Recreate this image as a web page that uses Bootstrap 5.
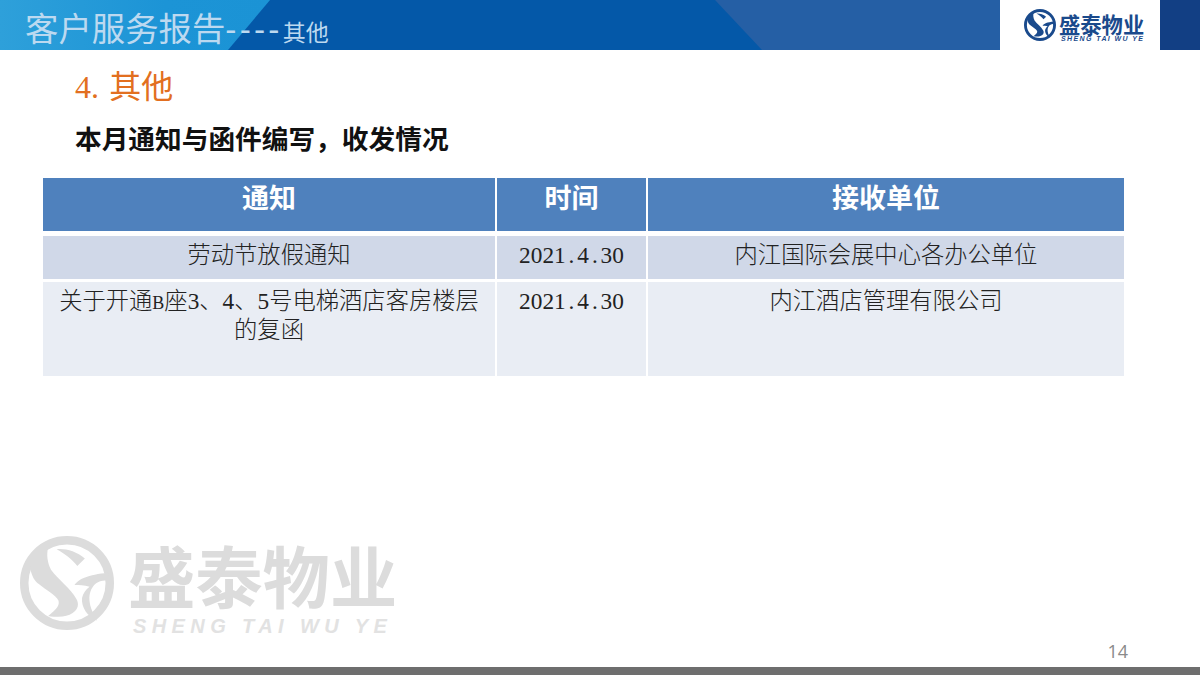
<!DOCTYPE html>
<html lang="zh-CN">
<head>
<meta charset="utf-8">
<title>客户服务报告</title>
<link href="https://cdn.jsdelivr.net/npm/bootstrap@5.3.0/dist/css/bootstrap.min.css" rel="stylesheet">
<style>
html,body{height:675px;overflow:hidden}
body{background:#fff;font-family:"Noto Sans CJK SC",sans-serif;color:#222}
.slide{height:675px;width:1200px}
.topbar{height:50px;position:relative;background:#255fa5;overflow:hidden}
.topbar::before{content:"";position:absolute;inset:0 0 0 0;width:770px;background:#0458a8;clip-path:polygon(0 0,715px 0,762px 100%,0 100%)}
.topbar::after{content:"";position:absolute;inset:0;width:275px;background:linear-gradient(90deg,#2ea0da 0,#1c94d6 60%,#1b93d5 100%);clip-path:polygon(0 0,270px 0,228px 100%,0 100%)}
.bar-title{position:relative;z-index:1;padding:2px 0 0 25px;color:#bcd9f0;font-size:33.4px;line-height:50px;white-space:nowrap;flex:1 1 auto}
.bar-dash{font-family:"Liberation Sans",sans-serif;letter-spacing:3.2px}
.bar-sub{font-size:23px}
.logo-box{position:relative;z-index:1;width:160px;height:50px;background:#fff;padding-left:24px}
.bar-end{position:relative;z-index:1;width:40px;height:50px;background:#123f84}
.logo-small{width:32px;height:32px;color:#1a4a8c;margin-top:9px;flex:none}
.brand-small{color:#1a4a8c;margin-left:3px;margin-top:12px}
.brand-small-cn{font-size:21.3px;line-height:23px;font-weight:700;white-space:nowrap}
.brand-small-en{font:italic 700 7px/7px "Liberation Sans",sans-serif;letter-spacing:1.4px;white-space:nowrap;padding-left:2px}
.sec-head{color:#e26f20;font-size:32px;line-height:40px;padding:14px 0 0 75px}
.sec-num{font-family:"Liberation Serif",serif;margin-right:3px}
.sec-lead{font-size:26.7px;font-weight:700;line-height:36px;color:#111;padding:13px 0 0 75px}
.tbl-wrap{padding:22px 76px 0 43px}
.notice-tbl{table-layout:fixed;width:1081px;margin:0;border-collapse:separate;border-spacing:0;font-size:23.3px;font-weight:300;line-height:29px;color:#222;text-align:center}
.notice-tbl th,.notice-tbl td{padding:0 14px;border:0 solid #fff;border-right-width:2px;box-shadow:none;vertical-align:top}
.notice-tbl th:last-child,.notice-tbl td:last-child{border-right-width:0}
.notice-tbl th{height:58px;background:#4f81bd;color:#fff;font-size:27px;font-weight:700;padding-top:4px;border-bottom-width:5px;line-height:30px}
.row-a td{height:46px;background:#d0d8e8;border-bottom-width:3px;padding-top:3px}
.row-b td{height:94px;background:#e9edf4;padding-top:3px}
.lat{font-family:"Liberation Serif",serif;font-weight:400;line-height:1}
.lat-b{font-size:18px}
.dot{display:inline-block;width:.5em;font-style:normal;text-align:center}
.tail{margin-top:auto;height:130px;padding-left:20px}
.mark-logo{width:94px;height:94px;color:#dcdcdc;flex:none;margin-top:-1px}
.mark-text{color:#dcdcdc;margin-left:16px}
.mark-cn{font-size:67.3px;line-height:74px;font-weight:700;white-space:nowrap;margin-left:-2px}
.mark-en{font:italic 700 20px/22px "Liberation Sans",sans-serif;letter-spacing:5.4px;white-space:nowrap;padding:4px 0 0 3px;color:#e2e2e2}
.page-no{color:#8a8a8a;font:400 18px/24px "Open Sans",sans-serif;margin-left:auto;padding:0 72px 0 0;margin-top:102px}
.foot-bar{height:8px;background:#6e6e6e}
</style>
</head>
<body>
<svg width="0" height="0" class="d-block">
  <symbol id="st-logo" viewBox="0 0 100 100">
    <circle cx="50" cy="50" r="45.5" fill="none" stroke="currentColor" stroke-width="9"/>
    <path fill="currentColor" d="M30 12 C18 16 12 24 11 35 C13 44 16 48 20 51 C28 58 38 62 41 69 C42 74 40 77 30 85 C42 87 50 86 56 82 C62 78 63 72 60 67 C54 56 40 46 33 36 C29 28 28 20 30 12 Z"/>
    <path fill="currentColor" d="M39 14 C48 13 60 16 69 24 L61 32 C56 25 48 19 39 14 Z"/>
    <path fill="currentColor" d="M58 52 C62 46 72 41 94 39 L95 47 C88 47 84 48 80 51 C73 58 70 70 82 90 C72 86 65 76 66 66 C67 61 70 57 74 54 C68 52 63 52 58 52 Z"/>
  </symbol>
</svg>
<div class="slide d-flex flex-column">
  <header class="topbar d-flex">
    <div class="bar-title">客户服务报告<span class="bar-dash">----</span><span class="bar-sub">其他</span></div>
    <div class="logo-box d-flex">
      <svg class="logo-small"><use href="#st-logo"/></svg>
      <div class="brand-small">
        <div class="brand-small-cn">盛泰物业</div>
        <div class="brand-small-en">SHENG TAI WU YE</div>
      </div>
    </div>
    <div class="bar-end"></div>
  </header>
  <div class="sec-head"><span class="sec-num">4.</span> 其他</div>
  <div class="sec-lead">本月通知与函件编写，收发情况</div>
  <div class="tbl-wrap">
    <table class="table notice-tbl">
      <colgroup><col style="width:454px"><col style="width:151px"><col style="width:476px"></colgroup>
      <thead><tr><th>通知</th><th>时间</th><th>接收单位</th></tr></thead>
      <tbody>
        <tr class="row-a"><td>劳动节放假通知</td><td><span class="lat">2021<i class="dot">.</i>4<i class="dot">.</i>30</span></td><td>内江国际会展中心各办公单位</td></tr>
        <tr class="row-b"><td>关于开通<span class="lat lat-b">B</span>座<span class="lat">3</span>、<span class="lat">4</span>、<span class="lat">5</span>号电梯酒店客房楼层的复函</td><td><span class="lat">2021<i class="dot">.</i>4<i class="dot">.</i>30</span></td><td>内江酒店管理有限公司</td></tr>
      </tbody>
    </table>
  </div>
  <div class="tail d-flex">
    <svg class="mark-logo"><use href="#st-logo"/></svg>
    <div class="mark-text">
      <div class="mark-cn">盛泰物业</div>
      <div class="mark-en">SHENG TAI WU YE</div>
    </div>
    <div class="page-no">14</div>
  </div>
  <div class="foot-bar"></div>
</div>
</body>
</html>
